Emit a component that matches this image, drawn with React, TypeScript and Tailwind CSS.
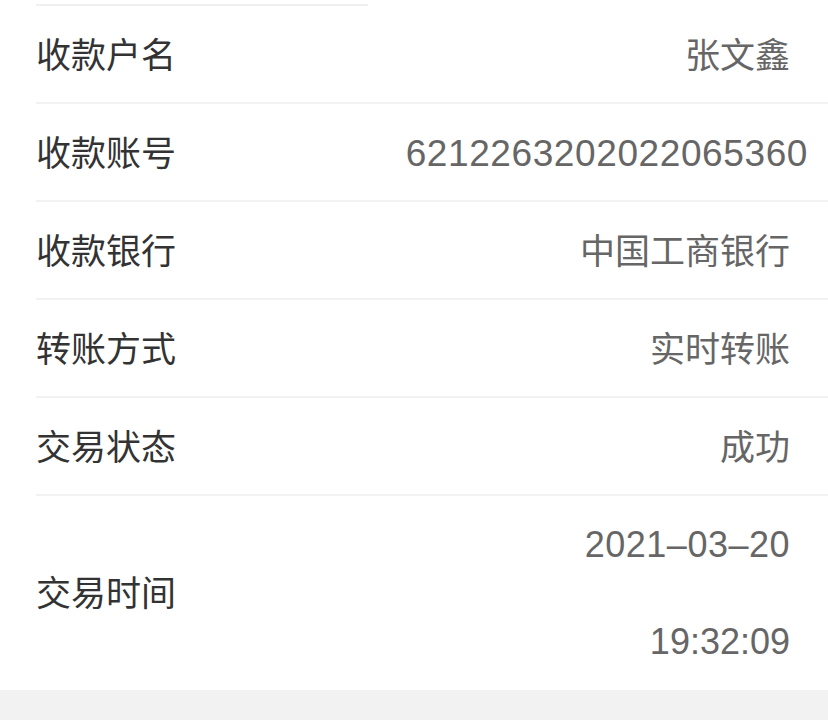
const rows = [
  { label: '收款户名', value: '张文鑫' },
  { label: '收款账号', value: '6212263202022065360', numeric: true },
  { label: '收款银行', value: '中国工商银行' },
  { label: '转账方式', value: '实时转账' },
  { label: '交易状态', value: '成功' },
];

const App = () => {
  return (
    <div
      className="min-h-screen bg-[#f2f2f2]"
      style={{ fontFamily: '"Liberation Sans", "Noto Sans CJK SC", sans-serif' }}
    >
      <div className="bg-white">
        {/* top partial divider */}
        <div className="pt-1">
          <div className="ml-9 h-[2px] w-[332px] bg-[#f0f0f0]" />
        </div>

        {rows.map((row) => (
          <div
            key={row.label}
            className="ml-9 flex h-[98px] items-center justify-between border-b-2 border-[#f2f2f2] pt-[2px]"
          >
            <span className="text-[35px] leading-none text-[#333333]">{row.label}</span>
            {row.numeric ? (
              <span className="pr-[20px] text-[37px] leading-none tracking-[0.6px] text-[#666666]">
                {row.value}
              </span>
            ) : (
              <span className="pr-[38px] text-[35px] leading-none text-[#666666]">{row.value}</span>
            )}
          </div>
        ))}

        {/* 交易时间 */}
        <div className="ml-9 flex h-[194px] items-center justify-between">
          <span className="text-[35px] leading-none text-[#333333]">交易时间</span>
          <div className="flex h-full flex-col items-end justify-between pr-[38px] pt-[27px] pb-[26px] text-[36px] leading-[44px] text-[#666666]">
            <span className="tracking-[0.5px]">2021–03–20</span>
            <span>19:32:09</span>
          </div>
        </div>
      </div>
    </div>
  );
};

export default App;
